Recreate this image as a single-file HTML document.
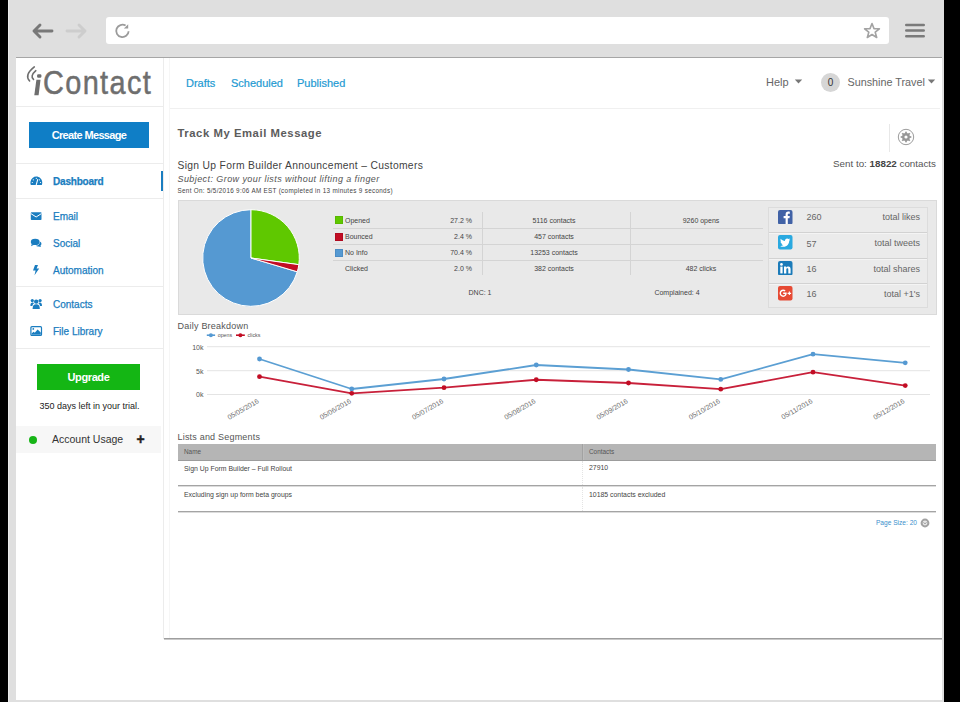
<!DOCTYPE html>
<html><head><meta charset="utf-8">
<style>
*{margin:0;padding:0;box-sizing:border-box}
html,body{width:960px;height:702px;overflow:hidden;background:#000;font-family:"Liberation Sans",sans-serif}
.a{position:absolute}
.t{position:absolute;white-space:nowrap;line-height:1}
#win{position:absolute;left:8px;top:0;width:936px;height:702px;background:#dfdfdf}
#topline{left:16px;top:57px;width:926px;height:1px;background:#a6a6a6}
#content{left:16px;top:58px;width:926px;height:642px;background:#fff}
#addr{left:106px;top:17px;width:783px;height:27px;background:#fff;border-radius:3px}
.sb{color:#1a7dc0;font-size:10px;-webkit-text-stroke:0.25px #1a7dc0}
.hr{position:absolute;height:1px;background:#ececec}
</style></head><body>
<div id="win"></div>
<div class="a" style="left:8px;top:0;width:1px;height:702px;background:#ececec"></div>
<div class="a" id="topline"></div>
<div class="a" id="content"></div>
<div class="a" id="addr"></div>

<!-- browser icons -->
<svg class="a" style="left:30px;top:22px" width="26" height="18" viewBox="0 0 26 18">
  <path d="M4 9 H22 M10 3 L4 9 L10 15" stroke="#787878" stroke-width="2.9" fill="none" stroke-linecap="round" stroke-linejoin="round"/>
</svg>
<svg class="a" style="left:63px;top:22px" width="26" height="18" viewBox="0 0 26 18">
  <path d="M4 9 H22 M16 3 L22 9 L16 15" stroke="#cdcdcd" stroke-width="2.9" fill="none" stroke-linecap="round" stroke-linejoin="round"/>
</svg>
<svg class="a" style="left:110px;top:18px" width="26" height="26" viewBox="0 0 26 26">
  <path d="M18.6 13.2 A6.2 6.2 0 1 1 15.6 7.6" stroke="#9b9b9b" stroke-width="1.8" fill="none"/>
  <path d="M13.9 10.6 L18.2 10.6 L18.2 6.2 Z" fill="#9b9b9b"/>
</svg>
<svg class="a" style="left:863px;top:22px" width="18" height="17" viewBox="0 0 18 17">
  <path d="M9 1.5 L11 6.6 L16.4 6.8 L12.2 10.2 L13.7 15.5 L9 12.5 L4.3 15.5 L5.8 10.2 L1.6 6.8 L7 6.6 Z" stroke="#a3a3a3" stroke-width="1.6" fill="none" stroke-linejoin="round"/>
</svg>
<svg class="a" style="left:904px;top:22px" width="22" height="17" viewBox="0 0 22 17">
  <path d="M2.3 3 H19.7 M2.3 8.5 H19.7 M2.3 14.2 H19.7" stroke="#7a7a7a" stroke-width="2.6" stroke-linecap="round"/>
</svg>

<!-- sidebar -->
<div class="a" style="left:163px;top:58px;width:1px;height:581px;background:#ececec"></div>
<div class="a" style="left:169px;top:58px;width:1px;height:581px;background:#f6f6f6"></div>
<div class="a" style="left:164px;top:638px;width:778px;height:1px;background:#9e9e9e"></div><div class="a" style="left:164px;top:639px;width:778px;height:1px;background:#c9c9c9"></div>

<svg class="a" style="left:20px;top:60px" width="30" height="40" viewBox="0 0 30 40">
  <path d="M14.3 6.9 Q4 15 9.6 21" stroke="#6e6e6e" stroke-width="1.6" fill="none" stroke-linecap="round"/>
  <path d="M15.8 10.7 Q9.75 16.15 13.5 19.4" stroke="#6e6e6e" stroke-width="1.6" fill="none" stroke-linecap="round"/>
  <path d="M16.4 19.7 L20.5 19.7 L18.6 35.3 L14.3 35.3 Z" fill="#6e6e6e"/>
  <rect x="17.1" y="14.3" width="4.3" height="3.4" rx="1.2" fill="#6e6e6e"/>
</svg>
<div class="t" style="left:43px;top:64.5px;font-size:34px;color:#6e6e6e;letter-spacing:1.6px;-webkit-text-stroke:0.5px #6e6e6e;transform:scaleX(0.85);transform-origin:0 0">Contact</div>
<div class="hr" style="left:16px;top:106px;width:147px"></div>
<div class="a" style="left:29px;top:121.5px;width:120px;height:26.5px;background:#0f7ec6"></div>
<div class="t" style="left:29px;top:130px;width:120px;text-align:center;font-size:11px;font-weight:700;color:#fff;letter-spacing:-0.65px">Create Message</div>
<div class="hr" style="left:16px;top:163px;width:147px"></div>


<!-- sidebar icons -->
<svg class="a" style="left:30.3px;top:175.3px" width="13" height="11" viewBox="0 0 13 11">
  <path d="M0.8 10 C0.3 9 0.3 7.8 0.5 6.8 C1.1 3.6 3.6 1.6 6.3 1.6 C9.2 1.6 11.7 3.7 12.2 6.8 C12.4 7.8 12.3 9 11.8 10 Z" fill="#1a7dc0"/>
  <path d="M6.3 9.6 L7.7 4.6" stroke="#fff" stroke-width="1.1" stroke-linecap="round"/>
  <circle cx="6.3" cy="3.3" r="0.6" fill="#fff"/><circle cx="3.3" cy="4.8" r="0.6" fill="#fff"/><circle cx="9.4" cy="4.8" r="0.6" fill="#fff"/><circle cx="2.3" cy="7.5" r="0.6" fill="#fff"/><circle cx="10.5" cy="7.5" r="0.6" fill="#fff"/>
</svg>
<svg class="a" style="left:30px;top:211px" width="13" height="10" viewBox="0 0 13 10">
  <rect x="0.8" y="1.3" width="10.7" height="7.8" rx="0.8" fill="#1a7dc0"/>
  <path d="M0.9 2.6 L6.15 6 L11.4 2.6" stroke="#fff" stroke-width="1" fill="none"/>
</svg>
<svg class="a" style="left:30px;top:238px" width="13" height="10" viewBox="0 0 13 10">
  <ellipse cx="5.2" cy="3.9" rx="4.4" ry="3.1" fill="#1a7dc0"/>
  <path d="M1.8 6 L1 8.2 L4 6.8 Z" fill="#1a7dc0"/>
  <path d="M9.7 3.5 C11 4 11.6 5 11.4 6.2 C11.2 6.9 10.9 7.3 10.4 7.7 L11 9 L8.6 8.4 C7.7 8.6 6.6 8.4 5.8 7.8 C8 7.6 9.7 6.2 9.9 4.3 Z" fill="#1a7dc0"/>
</svg>
<svg class="a" style="left:31px;top:264px" width="10" height="12" viewBox="0 0 10 12">
  <path d="M4 1 L7 1 L5.6 4.6 L8.2 4.6 L3.5 11.2 L4.6 6.6 L2 6.6 Z" fill="#1a7dc0"/>
</svg>
<svg class="a" style="left:30px;top:298px" width="13" height="12" viewBox="0 0 13 12">
  <circle cx="6.2" cy="3.6" r="2.2" fill="#1a7dc0"/>
  <path d="M2.6 11 C2.6 7.6 3.8 6.2 6.2 6.2 C8.6 6.2 9.8 7.6 9.8 11 Z" fill="#1a7dc0"/>
  <circle cx="2.3" cy="2.6" r="1.6" fill="#1a7dc0"/><circle cx="10.1" cy="2.6" r="1.6" fill="#1a7dc0"/>
  <path d="M0.4 8 C0.4 5.6 1.2 4.6 2.6 4.6 C3.3 4.6 3.8 4.9 4.1 5.3 C3 6 2.5 6.9 2.4 8 Z" fill="#1a7dc0"/>
  <path d="M12 8 C12 5.6 11.2 4.6 9.8 4.6 C9.1 4.6 8.6 4.9 8.3 5.3 C9.4 6 9.9 6.9 10 8 Z" fill="#1a7dc0"/>
</svg>
<svg class="a" style="left:30px;top:325px" width="13" height="12" viewBox="0 0 13 12">
  <rect x="0.9" y="1.7" width="10.6" height="8.8" rx="1" fill="none" stroke="#1a7dc0" stroke-width="1.2"/>
  <circle cx="3.3" cy="3.9" r="0.9" fill="#1a7dc0"/>
  <path d="M1.6 9.8 L1.6 8.6 L3.6 6.8 L4.8 7.8 L7.6 4.4 L10.8 7.6 L10.8 9.8 Z" fill="#1a7dc0"/>
</svg>
<div class="t sb" style="left:53px;top:176.6px;font-weight:700;letter-spacing:-0.2px">Dashboard</div>
<div class="a" style="left:161px;top:171px;width:2px;height:20px;background:#1a7dc0"></div>
<div class="hr" style="left:16px;top:198px;width:147px"></div>
<div class="t sb" style="left:53px;top:211.6px">Email</div>
<div class="t sb" style="left:53px;top:238.6px">Social</div>
<div class="t sb" style="left:53px;top:265.6px">Automation</div>
<div class="hr" style="left:16px;top:286px;width:147px"></div>
<div class="t sb" style="left:53px;top:299.6px">Contacts</div>
<div class="t sb" style="left:53px;top:326.6px">File Library</div>
<div class="hr" style="left:16px;top:348px;width:147px"></div>

<div class="a" style="left:37px;top:364px;width:103px;height:26px;background:#14b614"></div>
<div class="t" style="left:37px;top:371.7px;width:103px;text-align:center;font-size:11px;font-weight:700;color:#fff;letter-spacing:-0.4px">Upgrade</div>
<div class="t" style="left:16px;top:402px;width:147px;text-align:center;font-size:9px;color:#222">350 days left in your trial.</div>
<div class="a" style="left:16px;top:426px;width:145px;height:27px;background:#f7f7f7"></div>
<div class="a" style="left:29px;top:436px;width:8px;height:8px;border-radius:50%;background:#17b517"></div>
<div class="t" style="left:52px;top:434px;font-size:10.5px;color:#333">Account Usage</div>
<div class="t" style="left:136.5px;top:432px;font-size:14px;font-weight:700;color:#222;-webkit-text-stroke:0.4px #222">+</div>

<!-- top nav -->
<div class="t" style="left:186px;top:78px;font-size:11px;color:#239ad2;-webkit-text-stroke:0.2px #239ad2">Drafts</div>
<div class="t" style="left:231px;top:78px;font-size:11px;color:#239ad2;-webkit-text-stroke:0.2px #239ad2">Scheduled</div>
<div class="t" style="left:297px;top:78px;font-size:11px;color:#239ad2;-webkit-text-stroke:0.2px #239ad2">Published</div>
<div class="t" style="left:766px;top:76.5px;font-size:11px;color:#666">Help</div>
<div class="t" style="left:847.5px;top:76.5px;font-size:10.8px;color:#666">Sunshine Travel</div>
<svg class="a" style="left:794px;top:79px" width="9" height="5" viewBox="0 0 9 5"><path d="M0.8 0.6 H8.2 L4.5 4.4 Z" fill="#777"/></svg>
<div class="a" style="left:821px;top:73px;width:19px;height:19px;border-radius:50%;background:#d6d6d6"></div>
<div class="t" style="left:821px;top:77.5px;width:19px;text-align:center;font-size:10px;color:#333">0</div>
<svg class="a" style="left:926.5px;top:79px" width="9" height="5" viewBox="0 0 9 5"><path d="M0.8 0.6 H8.2 L4.5 4.4 Z" fill="#777"/></svg>
<div class="hr" style="left:170px;top:108px;width:770px;background:#f0f0f0"></div>

<!-- title -->
<div class="t" style="left:177.5px;top:128.4px;font-size:11.3px;font-weight:700;color:#5c5c5c;letter-spacing:0.55px">Track My Email Message</div>
<div class="a" style="left:888.5px;top:124px;width:1.5px;height:28px;background:#e8e8e8"></div>
<svg class="a" style="left:897.3px;top:127.7px" width="18" height="18" viewBox="0 0 18 18">
  <circle cx="9" cy="9" r="7.7" fill="none" stroke="#9c9c9c" stroke-width="1"/>
  <g fill="#979797"><circle cx="9" cy="9" r="3.9"/><rect x="8.15" y="3.7" width="1.7" height="2.4" transform="rotate(0 9 9)"/><rect x="8.15" y="3.7" width="1.7" height="2.4" transform="rotate(45 9 9)"/><rect x="8.15" y="3.7" width="1.7" height="2.4" transform="rotate(90 9 9)"/><rect x="8.15" y="3.7" width="1.7" height="2.4" transform="rotate(135 9 9)"/><rect x="8.15" y="3.7" width="1.7" height="2.4" transform="rotate(180 9 9)"/><rect x="8.15" y="3.7" width="1.7" height="2.4" transform="rotate(225 9 9)"/><rect x="8.15" y="3.7" width="1.7" height="2.4" transform="rotate(270 9 9)"/><rect x="8.15" y="3.7" width="1.7" height="2.4" transform="rotate(315 9 9)"/></g>
  <circle cx="9" cy="9" r="1.6" fill="#fff"/>
</svg>
<div class="t" style="left:177.5px;top:161.3px;font-size:10.3px;color:#3f3f3f;letter-spacing:0.32px">Sign Up Form Builder Announcement – Customers</div>
<div class="t" style="left:177.5px;top:175.4px;font-size:9px;font-style:italic;color:#555;letter-spacing:0.42px">Subject: Grow your lists without lifting a finger</div>
<div class="t" style="left:177.5px;top:188px;font-size:6.3px;color:#444;letter-spacing:0.32px">Sent On: 5/5/2016 9:06 AM EST (completed in 13 minutes 9 seconds)</div>
<div class="t" style="left:736px;top:159px;width:200px;text-align:right;font-size:9.8px;color:#555">Sent to: <b style="color:#444">18822</b> contacts</div>

<!-- stats panel -->
<div class="a" style="left:178px;top:200px;width:759px;height:115px;background:#e9e9e9;border:1px solid #dadada"></div>
<svg class="a" style="left:195px;top:203px" width="110" height="110" viewBox="195 203 110 110">
  <path d="M251 258 L297.30 271.77 A48.3 48.3 0 1 1 251.00 209.70 Z" fill="#5599d2" stroke="#fff" stroke-width="1"/>
  <path d="M251 258 L251.00 209.70 A48.3 48.3 0 0 1 298.84 264.66 Z" fill="#5fc800" stroke="#fff" stroke-width="1"/>
  <path d="M251 258 L298.84 264.66 A48.3 48.3 0 0 1 297.30 271.77 Z" fill="#c20d24" stroke="#fff" stroke-width="1"/>
</svg>
<div class="a" style="left:334.5px;top:216px;width:8px;height:8px;background:#5fc800;border:1px solid #58b800"></div>
<div class="a" style="left:334.5px;top:232.5px;width:8px;height:8px;background:#c20d24;border:1px solid #b00a20"></div>
<div class="a" style="left:334.5px;top:248.7px;width:8px;height:8px;background:#5599d2;border:1px solid #4b8cc4"></div>
<div class="hr" style="left:333px;top:228px;width:430px;background:#d4d4d4"></div>
<div class="hr" style="left:333px;top:244px;width:430px;background:#d4d4d4"></div>
<div class="hr" style="left:333px;top:260px;width:430px;background:#d4d4d4"></div>
<div class="a" style="left:482px;top:212px;width:1px;height:63px;background:#d4d4d4"></div>
<div class="a" style="left:630px;top:212px;width:1px;height:63px;background:#d4d4d4"></div>
<div class="t" style="left:345px;top:216.5px;font-size:7px;color:#444">Opened</div>
<div class="t" style="left:345px;top:232.7px;font-size:7px;color:#444">Bounced</div>
<div class="t" style="left:345px;top:248.7px;font-size:7px;color:#444">No Info</div>
<div class="t" style="left:345px;top:264.9px;font-size:7px;color:#444">Clicked</div>
<div class="t" style="left:400px;top:216.5px;width:72px;text-align:right;font-size:7px;color:#444">27.2 %</div>
<div class="t" style="left:400px;top:232.7px;width:72px;text-align:right;font-size:7px;color:#444">2.4 %</div>
<div class="t" style="left:400px;top:248.7px;width:72px;text-align:right;font-size:7px;color:#444">70.4 %</div>
<div class="t" style="left:400px;top:264.9px;width:72px;text-align:right;font-size:7px;color:#444">2.0 %</div>
<div class="t" style="left:504px;top:216.5px;width:100px;text-align:center;font-size:7px;color:#444">5116 contacts</div>
<div class="t" style="left:504px;top:232.7px;width:100px;text-align:center;font-size:7px;color:#444">457 contacts</div>
<div class="t" style="left:504px;top:248.7px;width:100px;text-align:center;font-size:7px;color:#444">13253 contacts</div>
<div class="t" style="left:504px;top:264.9px;width:100px;text-align:center;font-size:7px;color:#444">382 contacts</div>
<div class="t" style="left:651px;top:216.5px;width:100px;text-align:center;font-size:7px;color:#444">9260 opens</div>
<div class="t" style="left:651px;top:264.9px;width:100px;text-align:center;font-size:7px;color:#444">482 clicks</div>
<div class="t" style="left:440px;top:289px;width:80px;text-align:center;font-size:7px;color:#444">DNC: 1</div>
<div class="t" style="left:627px;top:289px;width:100px;text-align:center;font-size:7px;color:#444">Complained: 4</div>

<!-- social -->
<div class="a" style="left:768px;top:207px;width:160px;height:101px;background:#ebebeb;border:1px solid #dcdcdc"></div>
<div class="hr" style="left:769px;top:232px;width:158px;background:#d2d2d2"></div>
<div class="hr" style="left:769px;top:233px;width:158px;background:#f4f4f4"></div>
<div class="hr" style="left:769px;top:257.5px;width:158px;background:#d2d2d2"></div>
<div class="hr" style="left:769px;top:258.5px;width:158px;background:#f4f4f4"></div>
<div class="hr" style="left:769px;top:283px;width:158px;background:#d2d2d2"></div>
<div class="hr" style="left:769px;top:284px;width:158px;background:#f4f4f4"></div>
<svg class="a" style="left:778px;top:209.5px" width="14.5" height="14.5" viewBox="0 0 14.5 14.5">
  <rect width="14.5" height="14.5" rx="2" fill="#4162a6"/>
  <path d="M7.6 14.5 V8.3 H5.6 V6 H7.6 V4.4 C7.6 2.6 8.6 1.6 10.3 1.6 C11 1.6 11.6 1.7 11.8 1.7 V3.7 H10.6 C9.8 3.7 9.8 4.1 9.8 4.7 V6 H11.8 L11.5 8.3 H9.8 V14.5 Z" fill="#fff"/>
</svg>
<svg class="a" style="left:778px;top:235px" width="14.5" height="14.5" viewBox="0 0 14.5 14.5">
  <rect width="14.5" height="14.5" rx="2" fill="#2aa9e0"/>
  <path d="M12.2 4.4 C11.8 4.6 11.4 4.7 11 4.7 C11.4 4.5 11.7 4.1 11.9 3.6 C11.5 3.8 11.1 4 10.6 4.1 C10.2 3.7 9.7 3.4 9.1 3.4 C7.9 3.4 7 4.4 7 5.5 C7 5.7 7 5.8 7.1 6 C5.3 5.9 3.8 5.1 2.8 3.8 C2.6 4.1 2.5 4.5 2.5 4.9 C2.5 5.6 2.9 6.3 3.4 6.6 C3.1 6.6 2.8 6.5 2.5 6.4 C2.5 7.4 3.2 8.3 4.2 8.5 C3.9 8.6 3.6 8.6 3.3 8.5 C3.6 9.4 4.4 10 5.3 10 C4.6 10.6 3.6 10.9 2.6 10.9 C2.4 10.9 2.3 10.9 2.1 10.9 C3 11.5 4.2 11.8 5.4 11.8 C9.1 11.8 11.2 8.7 11.2 6 V5.7 C11.6 5.4 11.9 5 12.2 4.4 Z" fill="#fff"/>
</svg>
<svg class="a" style="left:778px;top:260.7px" width="14.5" height="14.5" viewBox="0 0 14.5 14.5">
  <rect width="14.5" height="14.5" rx="2" fill="#1b7bb9"/>
  <rect x="2.3" y="5.6" width="2.3" height="6.8" fill="#fff"/><circle cx="3.45" cy="3.4" r="1.35" fill="#fff"/>
  <path d="M6 5.6 H8.2 V6.6 C8.6 5.9 9.4 5.4 10.4 5.4 C12 5.4 12.6 6.5 12.6 8.2 V12.4 H10.3 V8.7 C10.3 7.8 10.1 7.3 9.3 7.3 C8.6 7.3 8.3 7.9 8.3 8.7 V12.4 H6 Z" fill="#fff"/>
</svg>
<svg class="a" style="left:778px;top:286.3px" width="14.5" height="14.5" viewBox="0 0 14.5 14.5">
  <rect width="14.5" height="14.5" rx="2" fill="#e64a34"/>
  <path d="M5.2 6.6 V8 H7.2 C7 8.8 6.3 9.5 5.2 9.5 C4 9.5 3 8.5 3 7.25 C3 6 4 5 5.2 5 C5.8 5 6.3 5.2 6.6 5.6 L7.6 4.6 C7 4 6.1 3.6 5.2 3.6 C3.2 3.6 1.6 5.2 1.6 7.25 C1.6 9.3 3.2 10.9 5.2 10.9 C7.3 10.9 8.7 9.4 8.7 7.3 C8.7 7.1 8.7 6.8 8.6 6.6 Z" fill="#fff"/>
  <path d="M10.8 5.6 H11.9 V6.8 H13.1 V7.9 H11.9 V9.1 H10.8 V7.9 H9.6 V6.8 H10.8 Z" fill="#fff"/>
</svg>
<div class="t" style="left:806.5px;top:213.3px;font-size:9px;color:#666">260</div>
<div class="t" style="left:806.5px;top:239.8px;font-size:9px;color:#666">57</div>
<div class="t" style="left:806.5px;top:265.4px;font-size:9px;color:#666">16</div>
<div class="t" style="left:806.5px;top:290px;font-size:9px;color:#666">16</div>
<div class="t" style="left:840px;top:213.3px;width:80px;text-align:right;font-size:9px;color:#666">total likes</div>
<div class="t" style="left:840px;top:238.7px;width:80px;text-align:right;font-size:9px;color:#666">total tweets</div>
<div class="t" style="left:840px;top:265.4px;width:80px;text-align:right;font-size:9px;color:#666">total shares</div>
<div class="t" style="left:840px;top:290px;width:80px;text-align:right;font-size:9px;color:#666">total +1's</div>

<!-- chart -->
<div class="t" style="left:177.5px;top:321.6px;font-size:9px;color:#555;letter-spacing:0.23px">Daily Breakdown</div>
<svg class="a" style="left:0;top:0" width="960" height="702" viewBox="0 0 960 702" font-family="Liberation Sans">
  <g stroke="#e4e4e4" stroke-width="1"><path d="M207 346.7 H930 M207 370.7 H930 M207 394.5 H930"/></g>
  <g font-size="7" fill="#555" text-anchor="end"><text x="203.5" y="349.6">10k</text><text x="203.5" y="373.6">5k</text><text x="203.5" y="397.4">0k</text></g>
  <path d="M206.8 335.2 H215.1" stroke="#5599d2" stroke-width="1.6"/><circle cx="210.9" cy="335.2" r="2" fill="#5599d2"/>
  <path d="M236 335.2 H244.8" stroke="#c20d24" stroke-width="1.6"/><circle cx="240.4" cy="335.2" r="2" fill="#c20d24"/>
  <g font-size="5.3" fill="#555"><text x="217.7" y="337">opens</text><text x="247.4" y="337">clicks</text></g>
  <polyline points="259.50,359 351.75,389 444.00,379 536.25,365 628.50,369.5 720.75,379.4 813.00,354.2 905.25,362.8" fill="none" stroke="#5b9fd3" stroke-width="1.8" stroke-linejoin="round"/>
  <polyline points="259.50,376.7 351.75,393.3 444.00,387.7 536.25,379.75 628.50,383 720.75,389.2 813.00,372.2 905.25,385.6" fill="none" stroke="#c8203a" stroke-width="1.8" stroke-linejoin="round"/>
  <g fill="#5599d2"><circle cx="259.50" cy="359" r="2.4"/><circle cx="351.75" cy="389" r="2.4"/><circle cx="444.00" cy="379" r="2.4"/><circle cx="536.25" cy="365" r="2.4"/><circle cx="628.50" cy="369.5" r="2.4"/><circle cx="720.75" cy="379.4" r="2.4"/><circle cx="813.00" cy="354.2" r="2.4"/><circle cx="905.25" cy="362.8" r="2.4"/></g>
  <g fill="#c20d24"><circle cx="259.50" cy="376.7" r="2.4"/><circle cx="351.75" cy="393.3" r="2.4"/><circle cx="444.00" cy="387.7" r="2.4"/><circle cx="536.25" cy="379.75" r="2.4"/><circle cx="628.50" cy="383" r="2.4"/><circle cx="720.75" cy="389.2" r="2.4"/><circle cx="813.00" cy="372.2" r="2.4"/><circle cx="905.25" cy="385.6" r="2.4"/></g>
  <g font-size="7" fill="#707070" text-anchor="end">
<text x="259.50" y="402.5" transform="rotate(-30 259.50 402.5)">05/05/2016</text>
<text x="351.75" y="402.5" transform="rotate(-30 351.75 402.5)">05/06/2016</text>
<text x="444.00" y="402.5" transform="rotate(-30 444.00 402.5)">05/07/2016</text>
<text x="536.25" y="402.5" transform="rotate(-30 536.25 402.5)">05/08/2016</text>
<text x="628.50" y="402.5" transform="rotate(-30 628.50 402.5)">05/09/2016</text>
<text x="720.75" y="402.5" transform="rotate(-30 720.75 402.5)">05/10/2016</text>
<text x="813.00" y="402.5" transform="rotate(-30 813.00 402.5)">05/11/2016</text>
<text x="905.25" y="402.5" transform="rotate(-30 905.25 402.5)">05/12/2016</text>
  </g>
</svg>

<!-- lists -->
<div class="t" style="left:177.5px;top:433px;font-size:9px;color:#555;letter-spacing:0.2px">Lists and Segments</div>
<div class="a" style="left:178px;top:444px;width:758px;height:16.5px;background:#b5b5b5;border-bottom:1px solid #9c9c9c"></div>
<div class="a" style="left:582px;top:444px;width:1px;height:16px;background:#a2a2a2"></div><div class="a" style="left:583px;top:444px;width:1px;height:16px;background:#bdbdbd"></div>
<div class="t" style="left:184px;top:448.5px;font-size:6.4px;color:#555">Name</div>
<div class="t" style="left:589px;top:448.5px;font-size:6.4px;color:#555">Contacts</div>
<div class="t" style="left:184px;top:465.6px;font-size:6.9px;color:#444">Sign Up Form Builder – Full Rollout</div>
<div class="t" style="left:589px;top:465.3px;font-size:6.9px;color:#444">27910</div>
<div class="a" style="left:582px;top:461px;width:0;height:24px;border-left:1px dotted #e4e4e4"></div>
<div class="a" style="left:178px;top:485px;width:758px;height:1px;background:#a4a4a4"></div><div class="a" style="left:178px;top:486px;width:758px;height:1px;background:#dcdcdc"></div>
<div class="t" style="left:184px;top:491.5px;font-size:6.9px;color:#444">Excluding sign up form beta groups</div>
<div class="t" style="left:589px;top:491.5px;font-size:6.9px;color:#444">10185 contacts excluded</div>
<div class="a" style="left:582px;top:487px;width:0;height:24px;border-left:1px dotted #e4e4e4"></div>
<div class="a" style="left:178px;top:511px;width:758px;height:1px;background:#a4a4a4"></div><div class="a" style="left:178px;top:512px;width:758px;height:1px;background:#dcdcdc"></div>
<div class="t" style="left:817px;top:519.5px;width:100px;text-align:right;font-size:6.6px;color:#3a8fcc">Page Size: 20</div>
<svg class="a" style="left:920.2px;top:517.8px" width="10" height="10" viewBox="0 0 10 10"><circle cx="5" cy="5" r="3.4" fill="#e6e6e6" stroke="#a2a2a2" stroke-width="2"/><path d="M3.6 4.4 L5 5.8 L6.4 4.4" stroke="#909090" stroke-width="1" fill="none"/></svg>

</body></html>
